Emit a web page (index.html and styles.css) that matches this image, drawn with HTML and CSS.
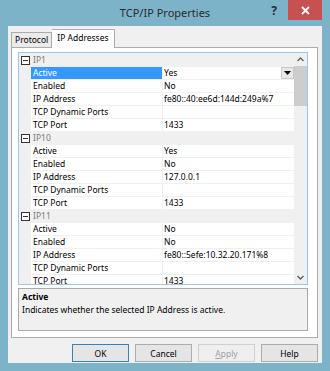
FILE: index.html
```html
<!DOCTYPE html>
<html lang="en">
<head>
    <meta charset="UTF-8">
    <title>TCP/IP Properties</title>
    <link rel="stylesheet" href="styles.css">
</head>
<body>
    <div class="window">
        <div class="titlebar">
            <span class="title">TCP/IP Properties</span>
            <span class="help-btn">?</span>
            <span class="close-btn">
                <svg width="9" height="9" viewBox="0 0 9 9"><path d="M1 1L8 8M8 1L1 8" stroke="#fff" stroke-width="1.8"/></svg>
            </span>
        </div>
        <div class="client">
            <div class="tabs">
                <div class="tab">Protocol</div>
                <div class="tab active">IP Addresses</div>
            </div>
            <div class="panel">
                <div class="grid">
                    <div class="rows">
                        <div class="row cat"><span class="toggle"><svg width="9" height="9" viewBox="0 0 9 9"><rect x="0.5" y="0.5" width="8" height="8" fill="#fff" stroke="#333"/><path d="M2 4.5H7" stroke="#333"/></svg></span><span class="cat-name">IP1</span></div>
                        <div class="row"><span class="name selected">Active</span><span class="value">Yes<span class="drop"><svg width="7" height="4" viewBox="0 0 7 4"><path d="M0 0H7L3.5 4Z" fill="#000"/></svg></span></span></div>
                        <div class="row"><span class="name">Enabled</span><span class="value">No</span></div>
                        <div class="row"><span class="name">IP Address</span><span class="value">fe80::40:ee6d:144d:249a%7</span></div>
                        <div class="row"><span class="name">TCP Dynamic Ports</span><span class="value"></span></div>
                        <div class="row"><span class="name">TCP Port</span><span class="value">1433</span></div>
                        <div class="row cat"><span class="toggle"><svg width="9" height="9" viewBox="0 0 9 9"><rect x="0.5" y="0.5" width="8" height="8" fill="#fff" stroke="#333"/><path d="M2 4.5H7" stroke="#333"/></svg></span><span class="cat-name">IP10</span></div>
                        <div class="row"><span class="name">Active</span><span class="value">Yes</span></div>
                        <div class="row"><span class="name">Enabled</span><span class="value">No</span></div>
                        <div class="row"><span class="name">IP Address</span><span class="value">127.0.0.1</span></div>
                        <div class="row"><span class="name">TCP Dynamic Ports</span><span class="value"></span></div>
                        <div class="row"><span class="name">TCP Port</span><span class="value">1433</span></div>
                        <div class="row cat"><span class="toggle"><svg width="9" height="9" viewBox="0 0 9 9"><rect x="0.5" y="0.5" width="8" height="8" fill="#fff" stroke="#333"/><path d="M2 4.5H7" stroke="#333"/></svg></span><span class="cat-name">IP11</span></div>
                        <div class="row"><span class="name">Active</span><span class="value">No</span></div>
                        <div class="row"><span class="name">Enabled</span><span class="value">No</span></div>
                        <div class="row"><span class="name">IP Address</span><span class="value">fe80::5efe:10.32.20.171%8</span></div>
                        <div class="row"><span class="name">TCP Dynamic Ports</span><span class="value"></span></div>
                        <div class="row"><span class="name">TCP Port</span><span class="value">1433</span></div>
                    </div>
                    <div class="scrollbar">
                        <svg class="arrow" width="7" height="5" viewBox="0 0 7 5"><path d="M0.5 4L3.5 1L6.5 4" stroke="#606060" stroke-width="1.4" fill="none"/></svg>
                        <div class="thumb"></div>
                        <div class="track"></div>
                        <svg class="arrow" width="7" height="5" viewBox="0 0 7 5"><path d="M0.5 1L3.5 4L6.5 1" stroke="#606060" stroke-width="1.4" fill="none"/></svg>
                    </div>
                </div>
                <div class="desc">
                    <div class="desc-title">Active</div>
                    <div class="desc-text">Indicates whether the selected IP Address is active.</div>
                </div>
            </div>
            <div class="buttons">
                <div class="btn default">OK</div>
                <div class="btn">Cancel</div>
                <div class="btn disabled"><u>A</u>pply</div>
                <div class="btn">Help</div>
            </div>
        </div>
    </div>
</body>
</html>
```

FILE: styles.css
```css
* {
    margin: 0;
    padding: 0;
    box-sizing: border-box;
}

body {
    width: 330px;
    height: 371px;
    overflow: hidden;
    font-family: "Noto Sans", "Open Sans", sans-serif;
    font-size: 8.5px;
    color: #000;
}

.window {
    width: 330px;
    height: 371px;
    background-color: #7db3c9;
    padding: 0 8px 8px 8px;
    display: flex;
    flex-direction: column;
}

.titlebar {
    height: 26px;
    position: relative;
    display: flex;
    justify-content: center;
    align-items: center;
}

.title {
    font-size: 11px;
    color: #2b2b2b;
    margin-top: -2px;
}

.help-btn {
    position: absolute;
    right: 45px;
    top: 2px;
    font-size: 12px;
    font-weight: bold;
    color: #1f2f3a;
}

.close-btn {
    position: absolute;
    right: 0;
    top: 0;
    width: 34px;
    height: 20px;
    background-color: #c75050;
    display: flex;
    justify-content: center;
    align-items: center;
}

.client {
    flex: 1;
    background-color: #f0f0f0;
    padding: 3px 4px 0 3px;
    display: flex;
    flex-direction: column;
}

.tabs {
    display: flex;
    align-items: flex-end;
    height: 18px;
    position: relative;
    z-index: 1;
}

.tab {
    height: 15px;
    padding: 0 3px;
    border: 1px solid #acacac;
    border-bottom: none;
    background-color: #ebebeb;
    line-height: 14px;
    font-size: 8.5px;
}

.tab.active {
    height: 19px;
    margin-bottom: -1px;
    background-color: #fff;
    padding: 0 5px;
    line-height: 15px;
    border-left: none;
}

.panel {
    height: 291px;
    background-color: #fff;
    border: 1px solid #acacac;
    padding: 4px 9px 0 6px;
    display: flex;
    flex-direction: column;
}

.grid {
    height: 233px;
    border: 1px solid #9cc7ea;
    display: flex;
    overflow: hidden;
}

.rows {
    flex: 1;
    background-color: #f0f0f0;
    padding-top: 1px;
}

.row {
    height: 13px;
    display: flex;
    align-items: stretch;
    line-height: 12px;
    padding-left: 12px;
}

.row .name {
    width: 132px;
    background-color: #fff;
    border-bottom: 1px solid #f0f0f0;
    border-right: 1px solid #f0f0f0;
    padding-left: 2px;
    white-space: nowrap;
}

.row .name.selected {
    background-color: #3399ff;
    color: #fff;
}

.row .value {
    flex: 1;
    background-color: #fff;
    border-bottom: 1px solid #f0f0f0;
    padding-left: 1px;
    position: relative;
    white-space: nowrap;
}

.drop {
    position: absolute;
    right: 0;
    top: 0;
    width: 13px;
    height: 12px;
    background-color: #e8e8e8;
    border: 1px solid #c8c8c8;
    display: flex;
    justify-content: center;
    align-items: center;
}

.row.cat {
    padding-left: 0;
    background-color: #f0f0f0;
}

.toggle {
    width: 13px;
    display: flex;
    justify-content: center;
    align-items: center;
}

.cat-name {
    color: #7a7a7a;
    padding-left: 1px;
}

.scrollbar {
    width: 13px;
    background-color: #f0f0f0;
    display: flex;
    flex-direction: column;
    align-items: center;
}

.scrollbar .arrow {
    margin: 4px 0;
}

.thumb {
    width: 13px;
    height: 40px;
    background-color: #cdcdcd;
}

.track {
    flex: 1;
}

.desc {
    margin-top: 3px;
    height: 43px;
    background-color: #f0f0f0;
    border: 1px solid #aaa;
    padding: 2px 3px;
}

.desc-title {
    font-weight: bold;
    line-height: 12px;
}

.desc-text {
    line-height: 13px;
}

.buttons {
    display: flex;
    justify-content: flex-end;
    gap: 6px;
    margin-top: 6px;
}

.btn {
    width: 57px;
    height: 18px;
    background-color: #e5e5e5;
    border: 1px solid #acacac;
    display: flex;
    justify-content: center;
    align-items: center;
}

.btn.default {
    border-color: #3c7fb1;
}

.btn.disabled {
    color: #a0a0a0;
    background-color: #efefef;
    border-color: #d0d0d0;
}
```
